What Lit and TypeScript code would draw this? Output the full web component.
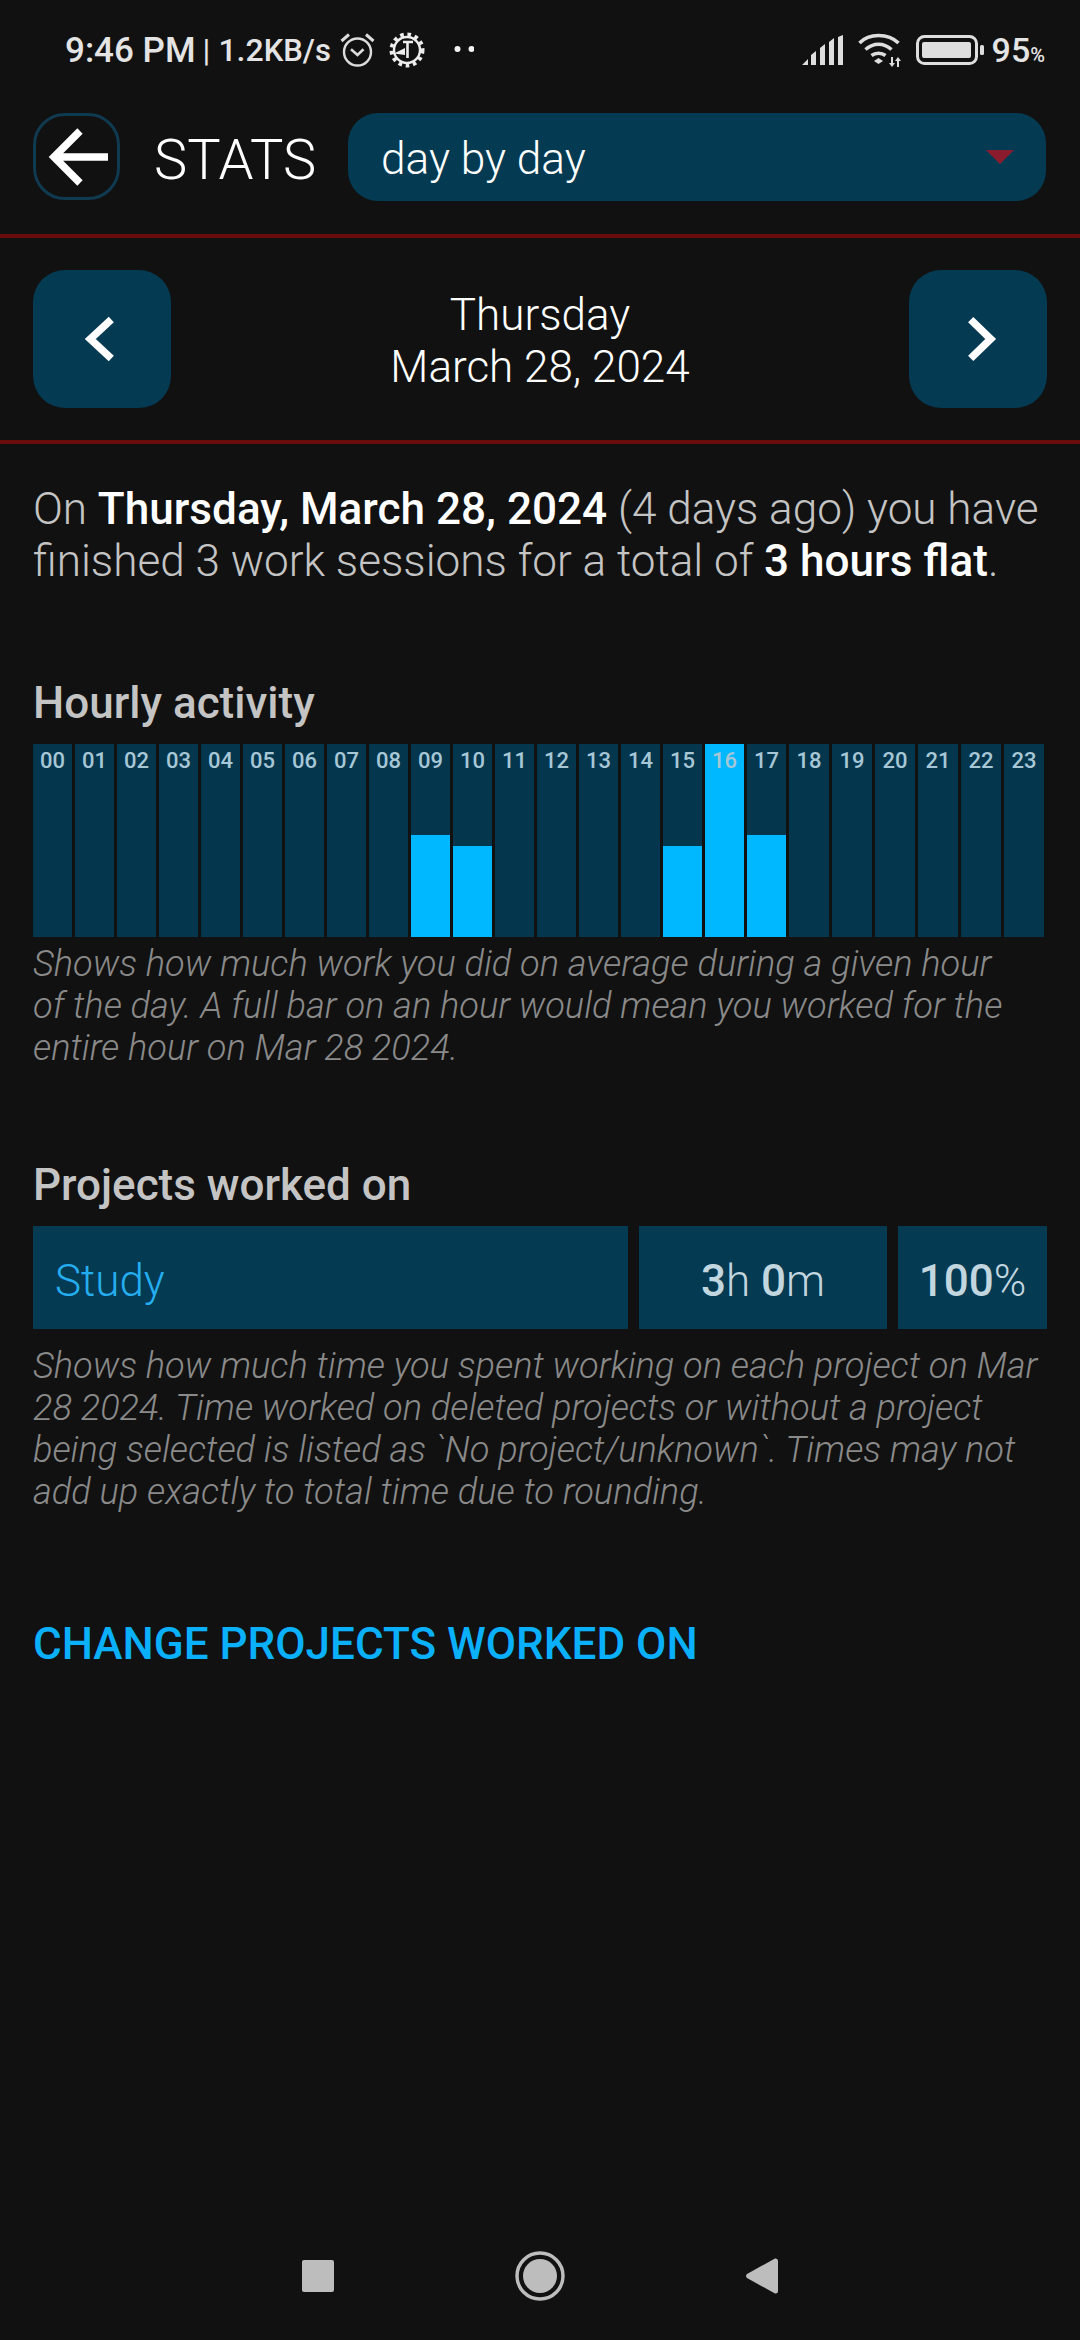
import { LitElement, html, css, svg } from 'lit'
import { customElement, state } from 'lit/decorators.js'

const HOURS = Array.from({ length: 24 }, (_, i) => String(i).padStart(2, '0'))

// filled height of each hour's bar, in percent of the track
const ACTIVITY: Record<string, number> = {
  '09': 53,
  '10': 47,
  '15': 47,
  '16': 100,
  '17': 53
}

@customElement('app-root')
export class AppRoot extends LitElement {
  static styles = css`
    :host {
      display: block;
      width: 1080px;
      height: 2340px;
      background: #111111;
      color: #ffffff;
      font-family: Roboto, 'Liberation Sans', sans-serif;
      font-weight: 300;
    }

    .page {
      display: flex;
      flex-direction: column;
      height: 2340px;
    }

    .status-bar {
      display: flex;
      align-items: center;
      height: 100px;
      padding: 0 35px 0 65px;
      box-sizing: border-box;
      color: #e4e4e4;
      font-weight: 500;
      font-size: 35px;
    }

    .status-bar svg {
      display: block;
      flex: none;
    }

    .status-sep {
      font-size: 32px;
      font-weight: 400;
      margin: 0 8px 0 7px;
    }

    .status-speed {
      font-size: 32px;
    }

    .status-unit {
      font-size: 31px;
    }

    .alarm {
      margin-left: 9px;
    }

    .cog {
      margin-left: 14px;
    }

    .dots {
      margin-left: 29px;
    }

    .status-right {
      margin-left: auto;
      display: flex;
      align-items: center;
    }

    .wifi {
      margin-left: 15px;
    }

    .battery {
      margin-left: 15px;
    }

    .pct {
      margin-left: 8px;
      font-size: 34px;
    }

    .pct small {
      font-size: 20px;
    }

    .header {
      display: flex;
      align-items: center;
      height: 87px;
      margin-top: 13px;
      padding: 0 34px 0 33px;
    }

    .back {
      width: 87px;
      height: 87px;
      box-sizing: border-box;
      border: 3px solid #0f3a50;
      border-radius: 32px;
      display: flex;
      align-items: center;
      justify-content: center;
      flex: none;
    }

    .title {
      font-size: 56px;
      margin-left: 34px;
      padding-top: 6px;
      width: 194px;
      flex: none;
      white-space: nowrap;
    }

    .dropdown {
      flex: 1;
      height: 88px;
      background: #043a52;
      border-radius: 30px;
      display: flex;
      align-items: center;
      justify-content: space-between;
      padding: 0 32px 0 33px;
      font-size: 44.2px;
    }

    .dropdown span {
      padding-top: 5px;
    }

    .caret {
      width: 0;
      height: 0;
      border-left: 14px solid transparent;
      border-right: 14px solid transparent;
      border-top: 14px solid #8a1c2e;
    }

    .date-nav {
      display: flex;
      align-items: center;
      justify-content: space-between;
      margin-top: 34px;
      padding: 32px 33px;
      border-top: 4px solid #6a0b0c;
      border-bottom: 4px solid #6a0b0c;
    }

    .nav-btn {
      width: 138px;
      height: 138px;
      background: #043a52;
      border-radius: 32px;
      display: flex;
      align-items: center;
      justify-content: center;
    }

    .date {
      text-align: center;
      font-size: 44px;
      line-height: 52px;
      padding-top: 4px;
    }

    .content {
      padding: 0 33px;
    }

    .summary {
      margin: 39px 0 0;
      font-size: 44.1px;
      line-height: 52px;
      color: #c4c4c4;
      white-space: nowrap;
    }

    .summary b {
      font-weight: 500;
      color: #ffffff;
    }

    .heading {
      margin: 92px 0 0;
      font-size: 44px;
      line-height: 48px;
      font-weight: 500;
      color: #c4c4c4;
    }

    .chart {
      display: grid;
      grid-template-columns: repeat(18, 39px) repeat(6, 40px);
      gap: 3px;
      height: 193px;
      margin-top: 17px;
    }

    .hour {
      position: relative;
      background: #04374e;
      overflow: hidden;
    }

    .hour .fill {
      position: absolute;
      left: 0;
      right: 0;
      bottom: 0;
      background: #00b8ff;
    }

    .hour .label {
      position: absolute;
      top: 3px;
      left: 0;
      right: 0;
      text-align: center;
      font-size: 22px;
      line-height: 28px;
      font-weight: 500;
      color: #a7c7d6;
    }

    .note {
      margin: 6px 0 0;
      font-size: 36.2px;
      line-height: 42px;
      font-style: italic;
      color: #8a8a8a;
      white-space: nowrap;
    }

    .note.wide {
      margin-top: 16px;
    }

    .projects {
      display: flex;
      gap: 11px;
      height: 103px;
      margin-top: 17px;
      width: 1014px;
    }

    .cell {
      background: #043a52;
      display: flex;
      align-items: center;
      justify-content: center;
      font-size: 44px;
      color: #c2d6df;
    }

    .cell span {
      padding-top: 6px;
    }

    .cell b {
      font-weight: 500;
    }

    .cell.name {
      width: 595px;
      justify-content: flex-start;
      padding-left: 22px;
      box-sizing: border-box;
      color: #24aef0;
    }

    .cell.time {
      width: 248px;
    }

    .cell.share {
      width: 149px;
    }

    .change {
      margin: 107px 0 0;
      font-size: 44px;
      line-height: 48px;
      font-weight: 500;
      color: #0bb0fb;
      white-space: nowrap;
    }

    .nav-bar {
      margin-top: auto;
      height: 89px;
      padding-bottom: 20px;
      display: flex;
      align-items: center;
      justify-content: center;
      gap: 181px;
    }

    .nav-bar svg {
      display: block;
      fill: #bdbdbd;
    }
  `

  @state() private hours = HOURS

  private renderStatusBar() {
    return html`
      <div class="status-bar">
        <span>9:46 PM</span><span class="status-sep">|</span><span class="status-speed">1.2<span class="status-unit">KB/s</span></span>
        <svg class="alarm" width="35" height="36" viewBox="0 0 35 36" fill="none" stroke="#dcdcdc" stroke-width="2.4">
          <circle cx="17.5" cy="20" r="13.5"></circle>
          <path d="M1.500 9L9 2.500M26 2.500L33.500 9" stroke-width="3"></path>
          <path d="M11 17.300L17.500 23L23.500 17.300" stroke-width="2.600"></path>
        </svg>
        <svg class="cog" width="36" height="36" viewBox="0 0 36 36" fill="none" stroke="#ececec">
          <circle cx="18" cy="18" r="15.5" stroke-width="4" stroke-dasharray="3.6 3.7"></circle>
          <circle cx="18" cy="18" r="13" stroke-width="2.4"></circle>
          <path d="M14 10h10M18.500 10v16" stroke-width="2.6"></path>
          <path d="M5 21.500L16 16v7z" fill="#ececec" stroke="none"></path>
        </svg>
        <svg class="dots" width="20" height="8" viewBox="0 0 20 8" fill="#f2f2f2">
          <circle cx="3.5" cy="3" r="3"></circle>
          <circle cx="17.5" cy="3" r="3"></circle>
        </svg>
        <div class="status-right">
          <svg width="41" height="30" viewBox="0 0 41 30" fill="#dedede">
            <path d="M0 30l6-6v6zM9 20l5-4v14H9zM18 13l5-4v21h-5zM27 7l5-4v27h-5zM36 2l5-2v30h-5z"></path>
          </svg>
          <svg class="wifi" width="43" height="34" viewBox="0 0 43 34" fill="none" stroke="#dedede" stroke-width="3.6">
            <path d="M1.500 10C11 0 30 0 40.500 10M7.500 16.500c8-7 18-7 26 0M13.500 22.500c4-3 10-3 14 0"></path>
            <path d="M16 28l4.500-3 4.500 3-4.500 3z" fill="#dedede" stroke="none"></path>
            <path d="M33 24h2v6h2l-3 4-3-4h2zM39 34h2v-6h2l-3-4-3 4h2z" fill="#dedede" stroke="none"></path>
          </svg>
          <svg class="battery" width="68" height="30" viewBox="0 0 68 30">
            <rect x="1.5" y="1.5" width="59" height="27" rx="7" fill="none" stroke="#dedede" stroke-width="3"></rect>
            <rect x="6" y="7" width="49" height="16" rx="2" fill="#dedede"></rect>
            <rect x="64" y="10" width="4" height="10" rx="1.5" fill="#dedede"></rect>
          </svg>
          <span class="pct">95<small>%</small></span>
        </div>
      </div>
    `
  }

  private renderHeader() {
    return html`
      <div class="header">
        <div class="back">
          <svg width="62" height="62" viewBox="0 0 62 62" fill="none" stroke="#ffffff" stroke-width="7.5">
            <path d="M34 5L8 31l26 26M8 31h54"></path>
          </svg>
        </div>
        <div class="title">STATS</div>
        <div class="dropdown">
          <span>day by day</span>
          <div class="caret"></div>
        </div>
      </div>
    `
  }

  private chevron(points: string) {
    return html`
      <svg width="40" height="50" viewBox="0 0 40 50" fill="none" stroke="#ffffff" stroke-width="7.5">
        ${svg`<polyline points=${points}></polyline>`}
      </svg>
    `
  }

  private renderChart() {
    return html`
      <div class="chart">
        ${this.hours.map((hour) => html`
          <div class="hour">
            ${ACTIVITY[hour] ? html`<div class="fill" style="height: ${ACTIVITY[hour]}%"></div>` : ''}
            <div class="label">${hour}</div>
          </div>
        `)}
      </div>
    `
  }

  private renderNavBar() {
    return html`
      <div class="nav-bar">
        <svg width="32" height="32" viewBox="0 0 32 32"><rect width="32" height="32" rx="2"></rect></svg>
        <svg width="50" height="50" viewBox="0 0 50 50">
          <circle cx="25" cy="25" r="23" fill="none" stroke="#bdbdbd" stroke-width="3.5"></circle>
          <circle cx="25" cy="25" r="17"></circle>
        </svg>
        <svg width="32" height="36" viewBox="0 0 32 36"><path d="M29 0.5Q32 0 32 3v30q0 3-3 2.500L1 20q-2-2 0-4z"></path></svg>
      </div>
    `
  }

  render() {
    return html`
      <div class="page">
        ${this.renderStatusBar()}
        ${this.renderHeader()}
        <div class="date-nav">
          <div class="nav-btn">${this.chevron('29.3,5.6 8.3,25 29.3,44.4')}</div>
          <div class="date">Thursday<br />March 28, 2024</div>
          <div class="nav-btn">${this.chevron('12.7,5.6 32.7,25 12.7,44.4')}</div>
        </div>
        <div class="content">
          <p class="summary">On <b>Thursday, March 28, 2024</b> (4 days ago) you have<br />finished 3 work sessions for a total of <b>3 hours flat</b>.</p>
          <h2 class="heading">Hourly activity</h2>
          ${this.renderChart()}
          <p class="note">Shows how much work you did on average during a given hour<br />of the day. A full bar on an hour would mean you worked for the<br />entire hour on Mar 28 2024.</p>
          <h2 class="heading">Projects worked on</h2>
          <div class="projects">
            <div class="cell name"><span>Study</span></div>
            <div class="cell time"><span><b>3</b>h <b>0</b>m</span></div>
            <div class="cell share"><span><b>100</b>%</span></div>
          </div>
          <p class="note wide">Shows how much time you spent working on each project on Mar<br />28 2024. Time worked on deleted projects or without a project<br />being selected is listed as \`No project/unknown\`. Times may not<br />add up exactly to total time due to rounding.</p>
          <div class="change">CHANGE PROJECTS WORKED ON</div>
        </div>
        ${this.renderNavBar()}
      </div>
    `
  }
}

declare global {
  interface HTMLElementTagNameMap {
    'app-root': AppRoot
  }
}
